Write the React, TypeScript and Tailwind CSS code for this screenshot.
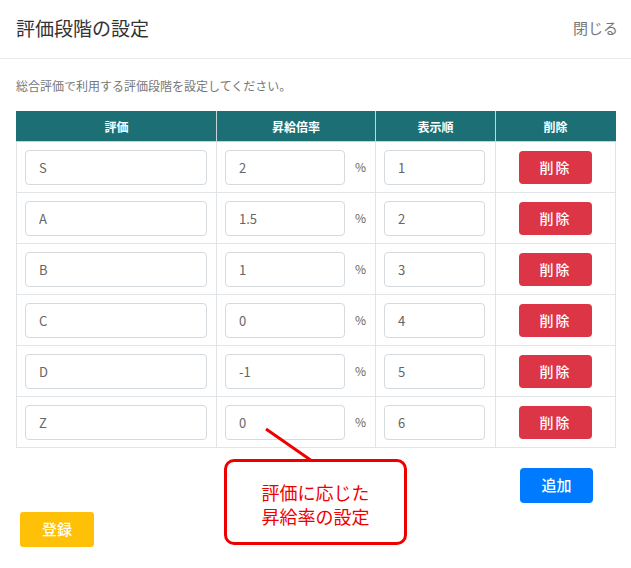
import React from "react";

const rows = [
  { grade: "S", rate: "2", order: "1" },
  { grade: "A", rate: "1.5", order: "2" },
  { grade: "B", rate: "1", order: "3" },
  { grade: "C", rate: "0", order: "4" },
  { grade: "D", rate: "-1", order: "5" },
  { grade: "Z", rate: "0", order: "6" },
];

function Field({ value, className }: { value: string; className: string }) {
  return (
    <input
      readOnly
      value={value}
      className={`h-[35px] rounded-[4px] border border-[#d5dadf] bg-white pl-[13px] text-[13px] text-[#666] outline-none ${className}`}
    />
  );
}

export default function App() {
  return (
    <div
      className="relative h-[568px] w-[631px] overflow-hidden bg-white"
      style={{ fontFamily: '"Noto Sans CJK JP", "Noto Sans", sans-serif' }}
    >
      <div className="flex h-[59px] items-center justify-between border-b border-[#e6e8ea] pl-[16px] pr-[13px]">
        <h1 className="mb-[2px] text-[19px] text-[#333]">評価段階の設定</h1>
        <button className="mb-[2px] text-[15px] text-[#777]">閉じる</button>
      </div>

      <p className="mt-[18px] px-[16px] text-[12px] leading-[18px] text-[#777]">
        総合評価で利用する評価段階を設定してください。
      </p>

      <table className="ml-[16px] mt-[16px] w-[599px] table-fixed border-collapse">
        <colgroup>
          <col className="w-[200px]" />
          <col className="w-[159px]" />
          <col className="w-[120px]" />
          <col className="w-[120px]" />
        </colgroup>
        <thead>
          <tr className="h-[30px] bg-[#1b6f75] text-[12px] font-bold text-white">
            <th className="border border-[#c9d3d5] border-t-[#1b6f75] border-l-[#1b6f75]">評価</th>
            <th className="border border-[#c9d3d5] border-t-[#1b6f75]">昇給倍率</th>
            <th className="border border-[#c9d3d5] border-t-[#1b6f75]">表示順</th>
            <th className="border border-[#c9d3d5] border-t-[#1b6f75] border-r-[#1b6f75]">削除</th>
          </tr>
        </thead>
        <tbody>
          {rows.map((r) => (
            <tr key={r.grade} className="h-[51px]">
              <td className="border border-[#e1e5e8] pl-[8px]">
                <Field value={r.grade} className="w-[182px]" />
              </td>
              <td className="border border-[#e1e5e8] pl-[8px]">
                <div className="flex items-center">
                  <Field value={r.rate} className="w-[120px]" />
                  <span className="ml-[10px] text-[12px] text-[#666]">%</span>
                </div>
              </td>
              <td className="border border-[#e1e5e8] pl-[8px]">
                <Field value={r.order} className="w-[101px]" />
              </td>
              <td className="border border-[#e1e5e8] text-center">
                <button className="h-[33px] w-[73px] rounded-[4px] bg-[#dc3545] text-[14px] font-medium tracking-[2px] text-white">
                  削除
                </button>
              </td>
            </tr>
          ))}
        </tbody>
      </table>

      <div className="flex justify-end pr-[38px] pt-[20px]">
        <button className="h-[35px] w-[73px] rounded-[4px] bg-[#007bff] text-[15px] font-medium text-white">
          追加
        </button>
      </div>
      <div className="pl-[20px] pt-[9px]">
        <button className="h-[35px] w-[74px] rounded-[3px] bg-[#ffc107] text-[15px] font-medium text-white">
          登録
        </button>
      </div>

      <svg className="absolute left-0 top-0" width="631" height="568">
        <line x1="266" y1="429" x2="312" y2="461" stroke="#ee0000" strokeWidth="3" />
      </svg>
      <div className="absolute left-[224px] top-[459px] flex h-[86px] w-[183px] flex-col items-center justify-center rounded-[10px] border-[3px] border-[#ee0000] bg-white pt-[4px] text-[18px] leading-[24px] text-[#ee0000]">
        <span>評価に応じた</span>
        <span>昇給率の設定</span>
      </div>
    </div>
  );
}
